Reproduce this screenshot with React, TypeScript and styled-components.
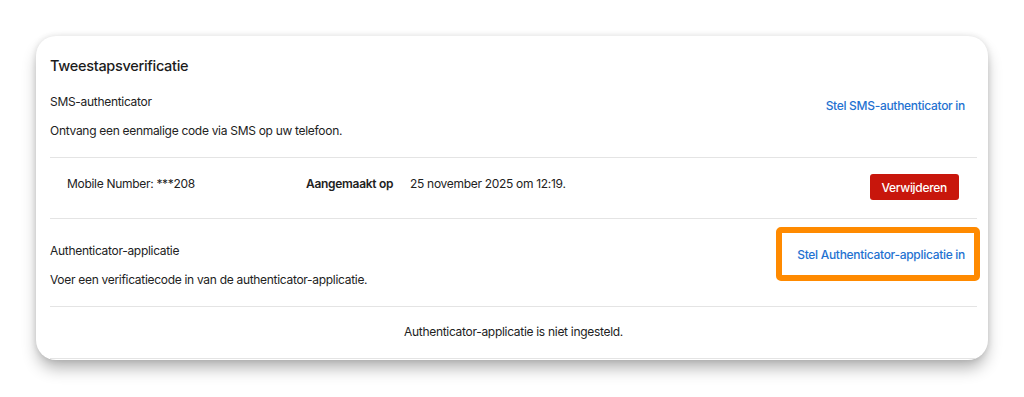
import styled, { createGlobalStyle } from "styled-components";

const GlobalStyle = createGlobalStyle`
  html, body {
    margin: 0;
    padding: 0;
    background: #ffffff;
  }
  body {
    font-family: Inter, "Liberation Sans", Arial, sans-serif;
    color: #222222;
    letter-spacing: -0.3px;
    -webkit-font-smoothing: antialiased;
  }
`;

const Page = styled.div`
  width: 1024px;
  height: 397px;
  padding: 36px 0 0 36px;
  box-sizing: border-box;
  overflow: hidden;
`;

const Card = styled.div`
  width: 952px;
  height: 324px;
  box-sizing: border-box;
  background: #fff;
  border-radius: 20px;
  overflow: hidden;
  padding: 20px 11px 0 14px;
  box-shadow: 0 10px 16px -2px rgba(0, 0, 0, 0.3), 0 0 6px rgba(0, 0, 0, 0.12);
`;

const Title = styled.h2`
  margin: 0 0 17px;
  font-size: 14.5px;
  line-height: 20px;
  font-weight: 500;
  color: #1b1b1b;
`;

const Section = styled.div<{ $top?: number }>`
  display: flex;
  justify-content: space-between;
  align-items: flex-start;
  padding: ${(p) => p.$top ?? 0}px 0 17px;
  border-bottom: 1px solid #e4e4e4;
`;

const Info = styled.div`
  display: flex;
  flex-direction: column;
  gap: 11px;
`;

const Name = styled.div`
  font-size: 12px;
  line-height: 18px;
`;

const Desc = styled.div`
  font-size: 12px;
  line-height: 18px;
`;

const LinkButton = styled.a`
  margin: 4px 12px 0 0;
  font-size: 12px;
  line-height: 18px;
  font-weight: 500;
  color: #1f72d1;
  text-decoration: none;
  cursor: pointer;
`;

// orange annotation frame drawn over the link
const Highlight = styled.span`
  position: relative;
  margin: 4px 12px 0 0;

  &::before {
    content: "";
    position: absolute;
    left: -21px;
    right: -15px;
    top: -19px;
    bottom: -17px;
    border: 6px solid #ff8a00;
    border-radius: 5px;
    pointer-events: none;
  }

  ${LinkButton} {
    margin: 0;
    display: block;
  }
`;

const EntryRow = styled.div`
  display: flex;
  align-items: flex-start;
  padding: 16px 18px 18px 17px;
  border-bottom: 1px solid #e4e4e4;
`;

const Cell = styled.div<{ $width?: number; $bold?: boolean }>`
  width: ${(p) => (p.$width ? `${p.$width}px` : "auto")};
  flex: ${(p) => (p.$width ? "none" : "1")};
  margin-top: 1px;
  font-size: 12px;
  line-height: 18px;
  font-weight: ${(p) => (p.$bold ? 600 : 400)};
`;

const DangerButton = styled.button`
  height: 26px;
  padding: 0 12px;
  border: none;
  border-radius: 3px;
  background: #c8160c;
  color: #fff;
  font-family: inherit;
  letter-spacing: -0.3px;
  font-size: 12px;
  font-weight: 500;
  cursor: pointer;
`;

const Empty = styled.div`
  padding: 16px 0 17px;
  text-align: center;
  font-size: 12px;
  line-height: 18px;
  border-bottom: 1px solid #e4e4e4;
`;

export default function App() {
  return (
    <>
      <GlobalStyle />
      <Page>
        <Card>
          <Title>Tweestapsverificatie</Title>
          <Section>
            <Info>
              <Name>SMS-authenticator</Name>
              <Desc>Ontvang een eenmalige code via SMS op uw telefoon.</Desc>
            </Info>
            <LinkButton>Stel SMS-authenticator in</LinkButton>
          </Section>
          <EntryRow>
            <Cell $width={239}>Mobile Number: ***208</Cell>
            <Cell $width={104} $bold>
              Aangemaakt op
            </Cell>
            <Cell>25 november 2025 om 12:19.</Cell>
            <DangerButton>Verwijderen</DangerButton>
          </EntryRow>
          <Section $top={23}>
            <Info>
              <Name>Authenticator-applicatie</Name>
              <Desc>Voer een verificatiecode in van de authenticator-applicatie.</Desc>
            </Info>
            <Highlight>
              <LinkButton>Stel Authenticator-applicatie in</LinkButton>
            </Highlight>
          </Section>
          <Empty>Authenticator-applicatie is niet ingesteld.</Empty>
        </Card>
      </Page>
    </>
  );
}
